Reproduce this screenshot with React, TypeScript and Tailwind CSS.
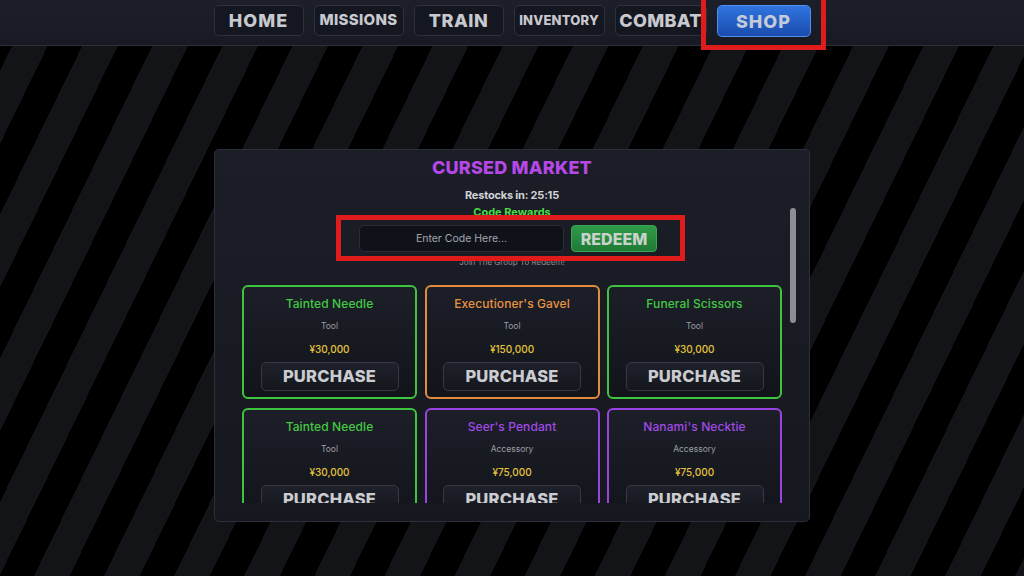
import React from "react";

const font = { fontFamily: "Inter, 'Noto Sans', sans-serif" };

type Item = { name: string; type: string; price: string; rarity: "green" | "orange" | "purple" };

const items: Item[] = [
  { name: "Tainted Needle", type: "Tool", price: "¥30,000", rarity: "green" },
  { name: "Executioner's Gavel", type: "Tool", price: "¥150,000", rarity: "orange" },
  { name: "Funeral Scissors", type: "Tool", price: "¥30,000", rarity: "green" },
  { name: "Tainted Needle", type: "Tool", price: "¥30,000", rarity: "green" },
  { name: "Seer's Pendant", type: "Accessory", price: "¥75,000", rarity: "purple" },
  { name: "Nanami's Necktie", type: "Accessory", price: "¥75,000", rarity: "purple" },
];

const borderCls: Record<Item["rarity"], string> = {
  green: "border-[#3fc43f]",
  orange: "border-[#e38c3c]",
  purple: "border-[#9b43e2]",
};
const nameCls: Record<Item["rarity"], string> = {
  green: "text-[#45c845]",
  orange: "text-[#e8923f]",
  purple: "text-[#a04ae6]",
};

function NavButton({ label, cls, active }: { label: string; cls: string; active?: boolean }) {
  return (
    <div
      className={
        "rounded-[5px] border flex items-center justify-center font-extrabold " +
        cls +
        " " +
        (active
          ? "h-[32px] bg-gradient-to-b from-[#2f74e0] to-[#1b4cad] border-[#4f8ef2] text-[#c3cad8]"
          : "h-[31px] bg-[#141720] border-[#2e313b] text-[#c8c9ce]")
      }
    >
      {label}
    </div>
  );
}

function Card({ item }: { item: Item }) {
  return (
    <div
      className={
        "h-[114px] rounded-[6px] border-2 flex flex-col items-center bg-gradient-to-b from-[#1c1f28] to-[#12141a] " +
        borderCls[item.rarity]
      }
    >
      <div className={"mt-[10px] text-[12px] leading-[14px] font-medium tracking-[0.1px] " + nameCls[item.rarity]}>
        {item.name}
      </div>
      <div className="mt-[10px] text-[8.5px] leading-[10px] text-[#9c9ea5]">{item.type}</div>
      <div className="mt-[12px] text-[10px] leading-[12px] font-medium text-[#e6c23c]">{item.price}</div>
      <div className="mt-[7px] w-[138px] h-[29px] shrink-0 rounded-[5px] border border-[#363945] bg-gradient-to-b from-[#1e212a] to-[#15171e] flex items-center justify-center text-[16.5px] font-extrabold text-[#cbccd0] tracking-[0.2px]">
        PURCHASE
      </div>
    </div>
  );
}

export default function App() {
  return (
    <div
      className="relative w-[1024px] h-[576px] overflow-hidden bg-[repeating-linear-gradient(116deg,#000000_0px,#000000_31px,#131417_31px,#131417_63px)]"
      style={font}
    >
      <div className="h-[46px] bg-gradient-to-b from-[#1c1f29] to-[#181a23] border-b border-[#2c2f3a] flex justify-center items-start pt-[5px] gap-[10px]">
        <NavButton label="HOME" cls="w-[90px] text-[18px] tracking-[1px]" />
        <NavButton label="MISSIONS" cls="w-[90px] text-[15px] tracking-[0.3px]" />
        <NavButton label="TRAIN" cls="w-[90px] text-[18px] tracking-[0.5px]" />
        <NavButton label="INVENTORY" cls="w-[91px] text-[13px] tracking-[0.2px]" />
        <NavButton label="COMBAT" cls="w-[92px] text-[18px] tracking-[0.3px]" />
        <NavButton label="SHOP" cls="w-[94px] text-[18px] tracking-[1px]" active />
      </div>

      <div className="mt-[103px] mx-auto w-[596px] h-[373px] rounded-[5px] border border-[#2c2f3a] bg-gradient-to-b from-[#1b1e27] to-[#16181f] relative">
        <div className="h-[353px] overflow-hidden flex flex-col items-center">
          <div className="mt-[7px] text-[18px] leading-[22px] font-extrabold text-[#b548e6] tracking-[0.2px]">CURSED MARKET</div>
          <div className="mt-[9px] text-[11px] leading-[14px] font-bold text-[#d2d3d7] tracking-[-0.2px]">Restocks in: 25:15</div>
          <div className="mt-[3px] text-[11px] leading-[14px] font-bold text-[#45dc45]">Code Rewards</div>
          <div className="mt-[6px] flex gap-[7px] pr-[8px]">
            <div className="w-[205px] h-[27px] rounded-[5px] border border-[#2a2d37] bg-[#10121a] flex items-center justify-center text-[10.5px] text-[#a3a6ae]">
              Enter Code Here...
            </div>
            <div className="w-[86px] h-[27px] rounded-[4px] bg-gradient-to-b from-[#2f9b48] to-[#1f7a35] border border-[#3aa552] flex items-center justify-center text-[16px] font-extrabold text-[#c9d3cb]">
              REDEEM
            </div>
          </div>
          <div className="mt-[5px] text-[8px] leading-[10px] text-[#8a8c92]">Join The Group To Redeem!</div>
          <div className="mt-[18px] grid grid-cols-[175px_175px_175px] gap-x-[7.5px] gap-y-[9px]">
            {items.map((it, i) => (
              <Card key={i} item={it} />
            ))}
          </div>
        </div>
        <div className="absolute left-[575px] top-[58px] w-[6px] h-[115px] rounded-full bg-[#8b8e95]" />
      </div>

      <div className="absolute left-[701px] top-[-5px] w-[125px] h-[55px] border-[5px] border-[#e01b1b]" />
      <div className="absolute left-[336px] top-[215px] w-[349px] h-[46px] border-[5px] border-[#e01b1b]" />
    </div>
  );
}
